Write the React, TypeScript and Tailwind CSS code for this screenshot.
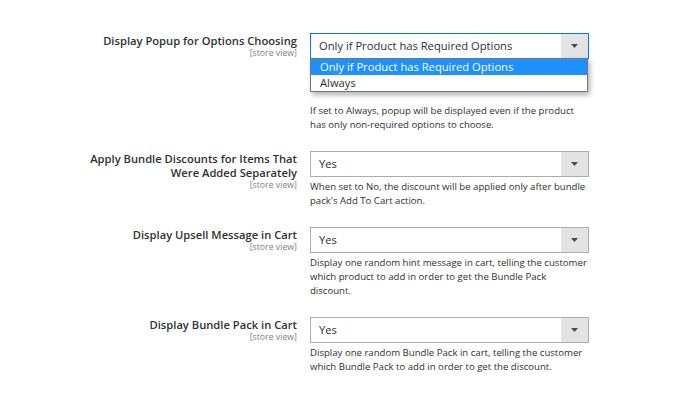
import React from "react";

interface FieldProps {
  label: string;
  value: string;
  note: string;
  open?: boolean;
  options?: string[];
}

function Arrow() {
  return (
    <svg width="7" height="4" viewBox="0 0 7 4" className="block">
      <path d="M0 0h7L3.5 4z" fill="#514943" />
    </svg>
  );
}

function ConfigRow({ label, value, note, open, options = [] }: FieldProps) {
  return (
    <div className="flex items-start gap-[13px]">
      <div className="w-[210px] shrink-0 pt-[1px] text-right">
        <div className="text-[11.2px] font-semibold leading-[14px] text-[#303030]">{label}</div>
        <div className="text-[8.75px] leading-[10px] text-[#808080]">[store view]</div>
      </div>
      <div className="w-[279px] shrink-0">
        <div className="relative">
          <div
            className={`flex h-[26px] items-stretch border bg-white ${
              open ? "border-[#007bdb]" : "border-[#adadad]"
            }`}
          >
            <div className="flex flex-1 items-center pl-[8px] text-[11.2px] text-[#303030]">{value}</div>
            <div className="flex w-[27px] items-center justify-center bg-[#e3e3e3]">
              <Arrow />
            </div>
          </div>
          {open && (
            <ul className="absolute left-0 right-[1px] top-[25px] z-10 border border-[#767676] bg-white text-[11.2px] text-[#303030] shadow-[2px_3px_5px_rgba(0,0,0,0.3)]">
              {options.map((opt, i) => (
                <li
                  key={opt}
                  className={`h-[16px] pl-[9px] leading-[16px] ${i === 0 ? "bg-[#1e90ff] text-white" : ""}`}
                >
                  {opt}
                </li>
              ))}
            </ul>
          )}
        </div>
        <p className={`${open ? "mt-[45px]" : "mt-[3px]"} text-[9.6px] leading-[14px] text-[#303030]`}>{note}</p>
      </div>
    </div>
  );
}

export default function App() {
  return (
    <div
      className="flex h-[405px] w-[685px] flex-col gap-[19px] bg-white pl-[87px] pt-[33px]"
      style={{ fontFamily: '"Open Sans", sans-serif' }}
    >
      <ConfigRow
        label="Display Popup for Options Choosing"
        value="Only if Product has Required Options"
        note="If set to Always, popup will be displayed even if the product has only non-required options to choose."
        open
        options={["Only if Product has Required Options", "Always"]}
      />
      <ConfigRow
        label="Apply Bundle Discounts for Items That Were Added Separately"
        value="Yes"
        note="When set to No, the discount will be applied only after bundle pack's Add To Cart action."
      />
      <ConfigRow
        label="Display Upsell Message in Cart"
        value="Yes"
        note="Display one random hint message in cart, telling the customer which product to add in order to get the Bundle Pack discount."
      />
      <ConfigRow
        label="Display Bundle Pack in Cart"
        value="Yes"
        note="Display one random Bundle Pack in cart, telling the customer which Bundle Pack to add in order to get the discount."
      />
    </div>
  );
}
